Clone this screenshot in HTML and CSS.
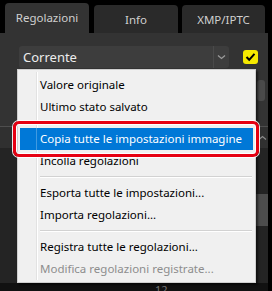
FILE: index.html
```html
<!DOCTYPE html>
<html>
<head>
<meta charset="utf-8">
<link rel="stylesheet" href="styles.css">
</head>
<body>
<div class="app">
  <div class="tabbar">
    <div class="tab active">Regolazioni</div>
    <div class="tab">Info</div>
    <div class="tab">XMP/IPTC</div>
  </div>
  <div class="panel">
    <div class="toolbar">
      <div class="select">
        <span class="select-text">Corrente</span>
        <span class="select-btn">
          <svg width="9" height="6" viewBox="0 0 9 6"><path d="M1 1.5 L4.5 4.5 L8 1.5" fill="none" stroke="#9a9a9a" stroke-width="1.3"/></svg>
        </span>
      </div>
      <div class="check">
        <svg width="11" height="10" viewBox="0 0 11 10"><path d="M1.5 5 L4.2 7.8 L9.5 1.8" fill="none" stroke="#000" stroke-width="2"/></svg>
      </div>
    </div>
    <div class="upper">
      <div class="spin"></div>
    </div>
    <div class="section-head">
      <svg class="chev-up" width="9" height="6" viewBox="0 0 9 6"><path d="M1 4.5 L4.5 1.5 L8 4.5" fill="none" stroke="#8a8a8a" stroke-width="1.2"/></svg>
    </div>
    <div class="lower">
      <div class="slider-block"></div>
    </div>
    <div class="footer"><span class="footer-num">12</span></div>
  </div>

  <div class="menu">
    <div class="gutter"></div>
    <div class="item">Valore originale</div>
    <div class="item">Ultimo stato salvato</div>
    <div class="sep"></div>
    <div class="item hl">Copia tutte le impostazioni immagine</div>
    <div class="item">Incolla regolazioni</div>
    <div class="sep"></div>
    <div class="item">Esporta tutte le impostazioni...</div>
    <div class="item">Importa regolazioni...</div>
    <div class="sep"></div>
    <div class="item">Registra tutte le regolazioni...</div>
    <div class="item disabled">Modifica regolazioni registrate...</div>
  </div>
  <div class="callout"></div>
</div>
</body>
</html>
```

FILE: styles.css
```css
* { box-sizing: border-box; }
html, body { margin: 0; padding: 0; }
body {
  background: #000;
  width: 272px;
  height: 291px;
  overflow: hidden;
  font-family: "Noto Sans", "Open Sans", sans-serif;
}
.app {
  position: relative;
  width: 272px;
  height: 291px;
}
.tabbar {
  display: flex;
  align-items: flex-end;
  height: 33px;
  padding-left: 5px;
}
.tab {
  height: 28px;
  width: 84px;
  margin-right: 5px;
  background: #2a2a2a;
  border-radius: 4px 4px 0 0;
  color: #cfcfcf;
  font-size: 11.5px;
  display: flex;
  align-items: center;
  justify-content: center;
  padding-top: 1px;
}
.tab:nth-child(2) { margin-right: 4px; }
.tab:nth-child(3) { width: 83px; }
.tab.active {
  height: 30px;
  background: #333;
  padding-bottom: 2px;
}
.panel {
  width: 268px;
  height: 258px;
  background: #333;
  display: flex;
  flex-direction: column;
}
.toolbar {
  display: flex;
  align-items: center;
  height: 22px;
  margin-top: 13px;
  padding-left: 19px;
}
.select {
  width: 210px;
  height: 22px;
  background: #3d3d3d;
  border-radius: 3px;
  display: flex;
  align-items: center;
}
.select-text {
  flex: 1;
  padding-left: 4px;
  color: #ececec;
  font-size: 13px;
}
.select-btn {
  width: 16px;
  height: 100%;
  border-left: 1px solid #4a4a4a;
  display: flex;
  align-items: center;
  justify-content: center;
}
.check {
  margin-left: 14px;
  width: 15px;
  height: 14px;
  background: #f6ea00;
  border-radius: 3px;
  display: flex;
  align-items: center;
  justify-content: center;
}
.upper {
  height: 58px;
  position: relative;
  display: flex;
  justify-content: flex-end;
  padding-top: 12px;
  padding-right: 3px;
}
.spin {
  width: 8px;
  height: 21px;
  background: #4a4a4a;
  border-radius: 3px;
}
.section-head {
  height: 22px;
  border-top: 1px solid #4e4e4e;
  background: #303030;
  display: flex;
  align-items: center;
  justify-content: flex-end;
  padding-right: 1px;
}
.lower {
  flex: 1;
  background: #242424;
  display: flex;
  justify-content: flex-end;
  padding-top: 46px;
}
.slider-block {
  width: 12px;
  height: 32px;
  background: #4d4d4d;
}
.footer {
  height: 8px;
  background: #111;
  position: relative;
  overflow: hidden;
}
.footer-num {
  position: absolute;
  left: 155px;
  top: 1px;
  color: #777;
  font-size: 11px;
  line-height: 11px;
}

.menu {
  position: absolute;
  left: 17px;
  top: 69px;
  width: 239px;
  padding: 4px 2px 2px 2px;
  background: #f0f0f0;
  border: 1px solid #cfcfcf;
  box-shadow: 2px 2px 2px rgba(0,0,0,0.55);
}
.gutter {
  position: absolute;
  left: 18px;
  top: 2px;
  bottom: 2px;
  width: 2px;
  border-left: 1px solid #e2e2e2;
  border-right: 1px solid #fff;
}
.item {
  position: relative;
  height: 22px;
  line-height: 22px;
  padding-left: 20px;
  font-size: 11.5px;
  color: #000;
  white-space: nowrap;
}
.item.hl {
  background: #0078d7;
  color: #fff;
}
.item.hl::before {
  content: "";
  position: absolute;
  left: 16px;
  top: 0;
  bottom: 0;
  width: 1px;
  background: rgba(255,255,255,0.25);
}
.item.disabled { color: #8d8d8d; }
.sep {
  height: 10px;
  margin-left: 20px;
  margin-right: 1px;
  position: relative;
}
.sep::after {
  content: "";
  position: absolute;
  left: 0; right: 0;
  top: 4px;
  height: 1px;
  background: #d2d2d2;
  border-bottom: 1px solid #fff;
  box-sizing: content-box;
}
.callout {
  position: absolute;
  left: 13px;
  top: 121px;
  width: 246px;
  height: 36px;
  border: 3px solid #e60012;
  border-radius: 6px;
  box-shadow: 0 0 0 1px rgba(255,255,255,0.9), inset 0 0 0 1px #fff;
}
```
